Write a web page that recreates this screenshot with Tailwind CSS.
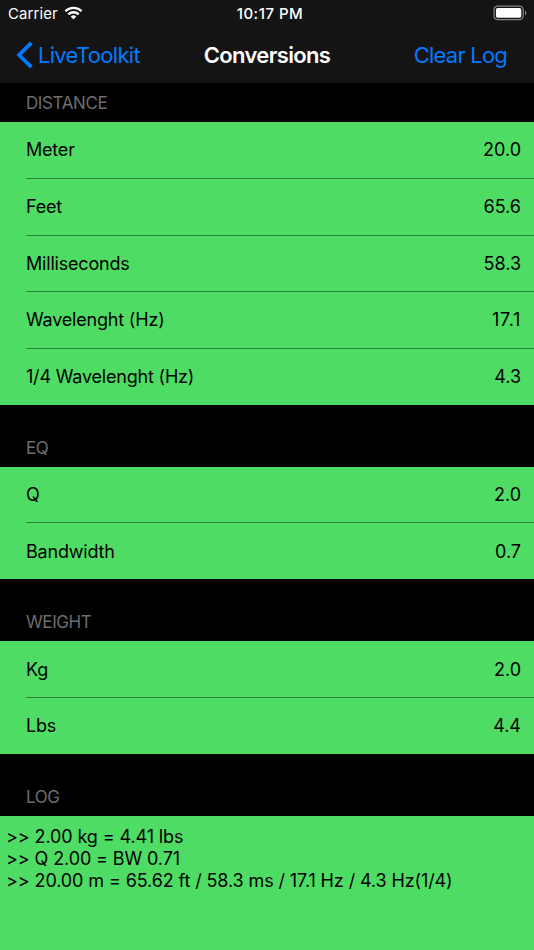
<!DOCTYPE html>
<html lang="en">
<head>
    <meta charset="UTF-8">
    <title>Conversions</title>
    <script src="https://cdn.jsdelivr.net/npm/@tailwindcss/browser@4"></script>
</head>
<body class="bg-black text-black font-['Inter',sans-serif]">
    <div class="w-[534px] h-[950px] flex flex-col overflow-hidden text-[18px] leading-[22px] tracking-[-0.2px] [font-feature-settings:'calt'_0]">
        <header class="h-[83px] shrink-0 bg-[#141414]">
            <div class="h-7 grid grid-cols-3 items-center pl-2 pr-[7px] text-white text-[15px]">
                <div class="flex items-center gap-[6px]">
                    <span class="tracking-[0.1px]">Carrier</span>
                    <svg class="w-[19px] h-[14px] -mt-0.5" viewBox="0 0 18 14" fill="none" stroke="white" stroke-width="2.3">
                        <path d="M0.9 5.2A11.6 11.6 0 0 1 17.1 5.2" />
                        <path d="M3.8 8.4A7.4 7.4 0 0 1 14.2 8.4" />
                        <path d="M9 13.4L6.2 10.6A4 4 0 0 1 11.8 10.6Z" fill="white" stroke="none" />
                    </svg>
                </div>
                <span class="text-center font-medium tracking-[0.5px] pl-[5px]">10:17 PM</span>
                <svg class="justify-self-end w-[34px] h-4 -mt-0.5" viewBox="0 0 34 16" fill="none">
                    <rect x="1" y="1.2" width="29.2" height="13.4" rx="3.6" stroke="#858585" stroke-width="1.2" />
                    <rect x="2.9" y="3.1" width="25.4" height="9.6" rx="1.8" fill="white" />
                    <path d="M32 5.4C33.8 6.2 33.8 9.5 32 10.3Z" fill="#858585" />
                </svg>
            </div>
            <nav class="h-[53px] grid grid-cols-[1fr_auto_1fr] items-center px-4 text-[22px] tracking-[-0.7px] text-[#007aff]">
                <a href="#" class="flex items-center gap-[5px]">
                    <svg class="w-[17px] h-[28px]" viewBox="0 0 17 28" fill="none" stroke="#007aff" stroke-width="3.8" stroke-linejoin="miter">
                        <path d="M15.4 1.8L3.1 14L15.4 26.2" />
                    </svg>
                    <span>LiveToolkit</span>
                </a>
                <h1 class="text-white font-semibold tracking-[-0.65px]">Conversions</h1>
                <a href="#" class="justify-self-end mr-[11px] tracking-[-0.8px]">Clear Log</a>
            </nav>
        </header>

        <h2 class="h-[39px] shrink-0 flex items-end pl-[26px] pb-2 text-[17px] tracking-[-0.4px] text-[#6d6d72]">DISTANCE</h2>
        <ul class="bg-[#4edc64] pl-[26px]">
            <li class="h-[57px] flex items-center justify-between pr-[13px] border-b border-[#2e813b]"><span>Meter</span><span class="tracking-normal">20.0</span></li>
            <li class="h-[57px] flex items-center justify-between pr-[13px] border-b border-[#2e813b]"><span>Feet</span><span class="tracking-normal">65.6</span></li>
            <li class="h-[56px] flex items-center justify-between pr-[13px] border-b border-[#2e813b]"><span>Milliseconds</span><span class="tracking-normal">58.3</span></li>
            <li class="h-[57px] flex items-center justify-between pr-[13px] border-b border-[#2e813b]"><span>Wavelenght (Hz)</span><span class="tracking-[0.7px]">17.1</span></li>
            <li class="h-[56px] flex items-center justify-between pr-[13px]"><span>1/4 Wavelenght (Hz)</span><span class="tracking-normal">4.3</span></li>
        </ul>

        <h2 class="h-[62px] shrink-0 flex items-end pl-[26px] pb-2 text-[17px] tracking-[-0.4px] text-[#6d6d72]">EQ</h2>
        <ul class="bg-[#4edc64] pl-[26px]">
            <li class="h-[56px] flex items-center justify-between pr-[13px] border-b border-[#2e813b]"><span>Q</span><span class="tracking-normal">2.0</span></li>
            <li class="h-[56px] flex items-center justify-between pr-[13px] pt-0.5"><span>Bandwidth</span><span class="tracking-normal">0.7</span></li>
        </ul>

        <h2 class="h-[62px] shrink-0 flex items-end pl-[26px] pb-2 text-[17px] tracking-[-0.4px] text-[#6d6d72]">WEIGHT</h2>
        <ul class="bg-[#4edc64] pl-[26px]">
            <li class="h-[57px] flex items-center justify-between pr-[13px] pt-px border-b border-[#2e813b]"><span>Kg</span><span class="tracking-normal">2.0</span></li>
            <li class="h-[56px] flex items-center justify-between pr-[13px]"><span>Lbs</span><span class="tracking-normal">4.4</span></li>
        </ul>

        <h2 class="h-[62px] shrink-0 flex items-end pl-[26px] pb-2 text-[17px] tracking-[-0.4px] text-[#6d6d72]">LOG</h2>
        <div class="flex-1 bg-[#4edc64] pt-[10px] pl-[6px] tracking-[-0.11px]">
            <p>&gt;&gt; 2.00 kg = 4.41 lbs</p>
            <p>&gt;&gt; Q 2.00 = BW 0.71</p>
            <p>&gt;&gt; 20.00 m = 65.62 ft / 58.3 ms / 17.1 Hz / 4.3 Hz(1/4)</p>
        </div>
    </div>
</body>
</html>
